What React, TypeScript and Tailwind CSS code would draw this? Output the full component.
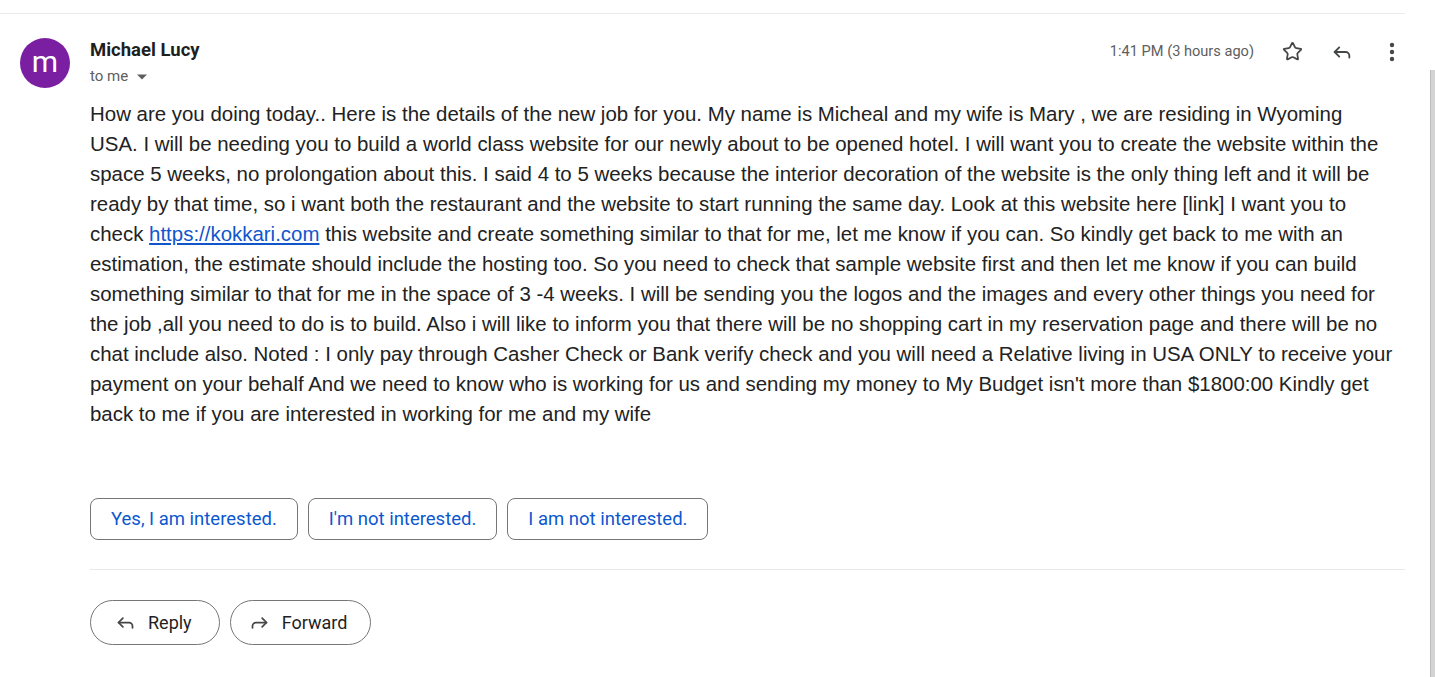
import { Reply, Forward, Star } from "lucide-react";

// lines broken where the mail client wrapped them
const lines = [
  "How are you doing today.. Here is the details of the new job for you. My name is Micheal and my wife is Mary , we are residing in Wyoming",
  "USA. I will be needing you to build a world class website for our newly about to be opened hotel. I will want you to create the website within the",
  "space 5 weeks, no prolongation about this. I said 4 to 5 weeks because the interior decoration of the website is the only thing left and it will be",
  "ready by that time, so i want both the restaurant and the website to start running the same day. Look at this website here [link] I want you to",
  "LINK",
  "estimation, the estimate should include the hosting too. So you need to check that sample website first and then let me know if you can build",
  "something similar to that for me in the space of 3 -4 weeks. I will be sending you the logos and the images and every other things you need for",
  "the job ,all you need to do is to build. Also i will like to inform you that there will be no shopping cart in my reservation page and there will be no",
  "chat include also. Noted : I only pay through Casher Check or Bank verify check and you will need a Relative living in USA ONLY to receive your",
  "payment on your behalf And we need to know who is working for us and sending my money to My Budget isn't more than $1800:00 Kindly get",
  "back to me if you are interested in working for me and my wife",
];

const smartReplies = ["Yes, I am interested.", "I'm not interested.", "I am not interested."];

export default function App() {
  return (
    <div className="flex min-h-screen bg-white font-['Liberation_Sans',Arial,sans-serif]">
      <div className="w-[1405px] shrink-0">
        {/* top rule */}
        <div className="mt-[13px] border-t border-[#ececec]" />

        {/* header */}
        <div className="flex pt-[24px] pl-[20px]">
          <div className="flex h-[50px] w-[50px] shrink-0 items-center justify-center rounded-full bg-[#7b1fa2] pb-[4px] font-['Roboto',sans-serif] text-[30px] text-white">
            m
          </div>
          <div className="ml-[20px] flex-1 font-['Roboto',sans-serif]">
            <div className="text-[18.5px] leading-[25px] font-bold text-[#1f1f1f]">Michael Lucy</div>
            <div className="mt-[3px] flex items-center text-[15px] leading-[20px] text-[#5e5e5e]">
              to me
              <svg width="10" height="6" viewBox="0 0 10 5" className="ml-[9px] mt-[2px]">
                <path d="M0 0h10L5 5z" fill="#5e5e5e" />
              </svg>
            </div>
          </div>
          <div className="flex h-[27px] items-center gap-[24px] font-['Roboto',sans-serif] text-[14.6px] text-[#5e5e5e]">
            <span className="mr-[1px]">1:41 PM (3 hours ago)</span>
            <span className="flex w-[26px] justify-center">
              <Star size={21} strokeWidth={2} color="#444746" />
            </span>
            <span className="flex w-[26px] justify-center">
              <Reply size={22} strokeWidth={2} color="#444746" />
            </span>
            <span className="flex w-[26px] justify-center">
              <svg width="6" height="20" viewBox="0 0 6 20">
                <circle cx="3" cy="3" r="2.2" fill="#444746" />
                <circle cx="3" cy="10" r="2.2" fill="#444746" />
                <circle cx="3" cy="17" r="2.2" fill="#444746" />
              </svg>
            </span>
          </div>
        </div>

        {/* message body */}
        <div className="mt-[11px] pl-[90px] text-[20.45px] leading-[30px] whitespace-nowrap text-[#222222]">
          {lines.map((line, i) =>
            line === "LINK" ? (
              <div key={i}>
                check{" "}
                <a href="#" className="text-[#1155cc] underline">
                  https://kokkari.com
                </a>{" "}
                this website and create something similar to that for me, let me know if you can. So kindly get back to me with an
              </div>
            ) : (
              <div key={i}>{line}</div>
            )
          )}
        </div>

        {/* smart replies */}
        <div className="mt-[69px] flex gap-[10px] pl-[90px] font-['Roboto',sans-serif]">
          {smartReplies.map((r) => (
            <button
              key={r}
              className="h-[42px] rounded-[8px] border border-[#747775] px-[20px] pt-[2px] text-[18.5px] text-[#0b57d0]"
            >
              {r}
            </button>
          ))}
        </div>

        <div className="mt-[29px] ml-[90px] border-t border-[#e8e8e8]" />

        {/* reply / forward */}
        <div className="mt-[30px] flex gap-[10px] pl-[90px] font-['Roboto',sans-serif] text-[18px] text-[#1f1f1f]">
          <button className="flex h-[45px] items-center gap-[12px] rounded-full border border-[#747775] pl-[24px] pr-[27px]">
            <Reply size={21} strokeWidth={2} color="#444746" />
            Reply
          </button>
          <button className="flex h-[45px] items-center gap-[12px] rounded-full border border-[#747775] pl-[18px] pr-[23px]">
            <Forward size={21} strokeWidth={2} color="#444746" />
            Forward
          </button>
        </div>
      </div>

      {/* scrollbar edge */}
      <div className="flex flex-1 justify-end">
        <div className="mt-[70px] w-[5px] border-l border-[#bdbdbd] bg-[#d4d4d4]" />
      </div>
    </div>
  );
}
